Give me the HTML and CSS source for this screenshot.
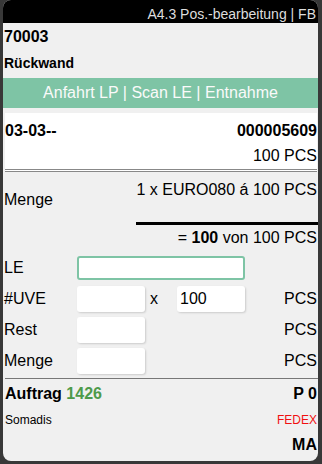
FILE: index.html
```html
<!DOCTYPE html>
<html lang="de">
<head>
  <meta charset="UTF-8">
  <title>A4.3 Pos.-bearbeitung</title>
  <meta name="viewport" content="width=device-width, initial-scale=1.0">
  <link rel="stylesheet" href="styles.css">
</head>
<body>
  <div class="app">
    <header class="topbar">A4.3 Pos.-bearbeitung | FB</header>

    <main class="maske">
      <div class="auftrag-nr">70003</div>
      <div class="bezeichnung">Rückwand</div>

      <div class="schritt">Anfahrt LP | Scan LE | Entnahme</div>

      <div class="platz">
        <div class="platz-zeile">
          <span>03-03--</span>
          <span>000005609</span>
        </div>
        <div class="platz-menge">100 PCS</div>
      </div>

      <div class="menge">
        <div class="menge-label">Menge</div>
        <div class="menge-info">1 x EURO080 á 100 PCS</div>
      </div>
      <div class="menge-summe">= <b>100</b> von 100 PCS</div>

      <form class="eingabe" onsubmit="return false">
        <div class="feld feld-le">
          <label for="le">LE</label>
          <input type="text" id="le">
        </div>
        <div class="feld">
          <label for="uve">#UVE</label>
          <input type="text" id="uve">
          <span class="mal">x</span>
          <input type="text" id="proUve" value="100">
          <span class="einheit">PCS</span>
        </div>
        <div class="feld">
          <label for="rest">Rest</label>
          <input type="text" id="rest">
          <span class="einheit">PCS</span>
        </div>
        <div class="feld">
          <label for="menge">Menge</label>
          <input type="text" id="menge">
          <span class="einheit">PCS</span>
        </div>
      </form>

      <div class="fuss">
        <div class="fuss-zeile">
          <span>Auftrag <span class="auftrag-id">1426</span></span>
          <span>P 0</span>
        </div>
        <div class="fuss-kunde">
          <span>Somadis</span>
          <span class="spediteur">FEDEX</span>
        </div>
        <div class="fuss-user">MA</div>
      </div>
    </main>
  </div>
</body>
</html>
```

FILE: styles.css
```css
body {
  margin: 0;
  background: #383838;
  font-family: "Liberation Sans", Arial, sans-serif;
  font-size: 16px;
  color: #000;
}

.app {
  margin: 0 4px 0 3px;
  height: 461px;
  background: #f0f0f0;
  border-radius: 8px;
  overflow: hidden;
}

.topbar {
  background: #000;
  color: #ddd;
  font-size: 14px;
  height: 23px;
  padding: 5px 2px 0 0;
  line-height: 18px;
  text-align: right;
  box-sizing: border-box;
}

.maske {
  padding: 0 1px;
}

.auftrag-nr {
  font-weight: bold;
  height: 27px;
  line-height: 27px;
}

.bezeichnung {
  font-weight: bold;
  font-size: 14px;
  height: 28px;
  line-height: 26px;
}

.schritt {
  margin: 0 -1px;
  background: #7ec4a5;
  color: #fafafa;
  text-align: center;
  height: 30px;
  line-height: 30px;
}

.platz {
  margin: 5px 0 0 1px;
  background: #fff;
  padding: 5px 0 1px;
  border-bottom: 3px double #888;
}

.platz-zeile {
  display: flex;
  justify-content: space-between;
  font-weight: bold;
  line-height: 25px;
}

.platz-menge {
  text-align: right;
  line-height: 25px;
}

.menge {
  display: flex;
  align-items: center;
}

.menge-label {
  padding-top: 3px;
  line-height: 20px;
}

.menge-info {
  margin: 0 -1px 0 auto;
  width: 181px;
  text-align: right;
  line-height: 20px;
  padding: 8px 1px 22px 0;
  border-bottom: 3px solid #000;
}

.menge-summe {
  text-align: right;
  padding-top: 3px;
  line-height: 20px;
}

.eingabe {
  margin: 8px 0 0;
}

.feld {
  display: flex;
  align-items: center;
  margin-bottom: 5px;
  line-height: 20px;
}

.feld:last-child {
  margin-bottom: 4px;
}

.feld label {
  width: 73px;
}

.feld input {
  width: 68px;
  height: 26px;
  border: none;
  border-radius: 3px;
  background: #fff;
  box-shadow: 1px 1px 2px rgba(0,0,0,0.15);
  padding: 0 3px;
  font: inherit;
  color: #000;
  box-sizing: border-box;
  outline: none;
}

.feld-le {
  margin-bottom: 6px;
}

.feld-le input {
  width: 168px;
  height: 24px;
  border: 2px solid #7ec4a5;
  box-shadow: none;
}

.mal {
  width: 32px;
  padding-left: 5px;
  box-sizing: border-box;
}

.einheit {
  margin-left: auto;
}

.fuss {
  margin: 0 -1px 0 1px;
  border-top: 1px solid #777;
  padding: 5px 1px 0 0;
}

.fuss-zeile {
  display: flex;
  justify-content: space-between;
  font-weight: bold;
  line-height: 20px;
}

.auftrag-id {
  color: #4d9a4a;
}

.fuss-kunde {
  display: flex;
  justify-content: space-between;
  font-size: 12px;
  margin-top: 2px;
  line-height: 28px;
}

.spediteur {
  color: #f01010;
}

.fuss-user {
  text-align: right;
  font-weight: bold;
  padding-top: 1px;
  line-height: 20px;
}
```
